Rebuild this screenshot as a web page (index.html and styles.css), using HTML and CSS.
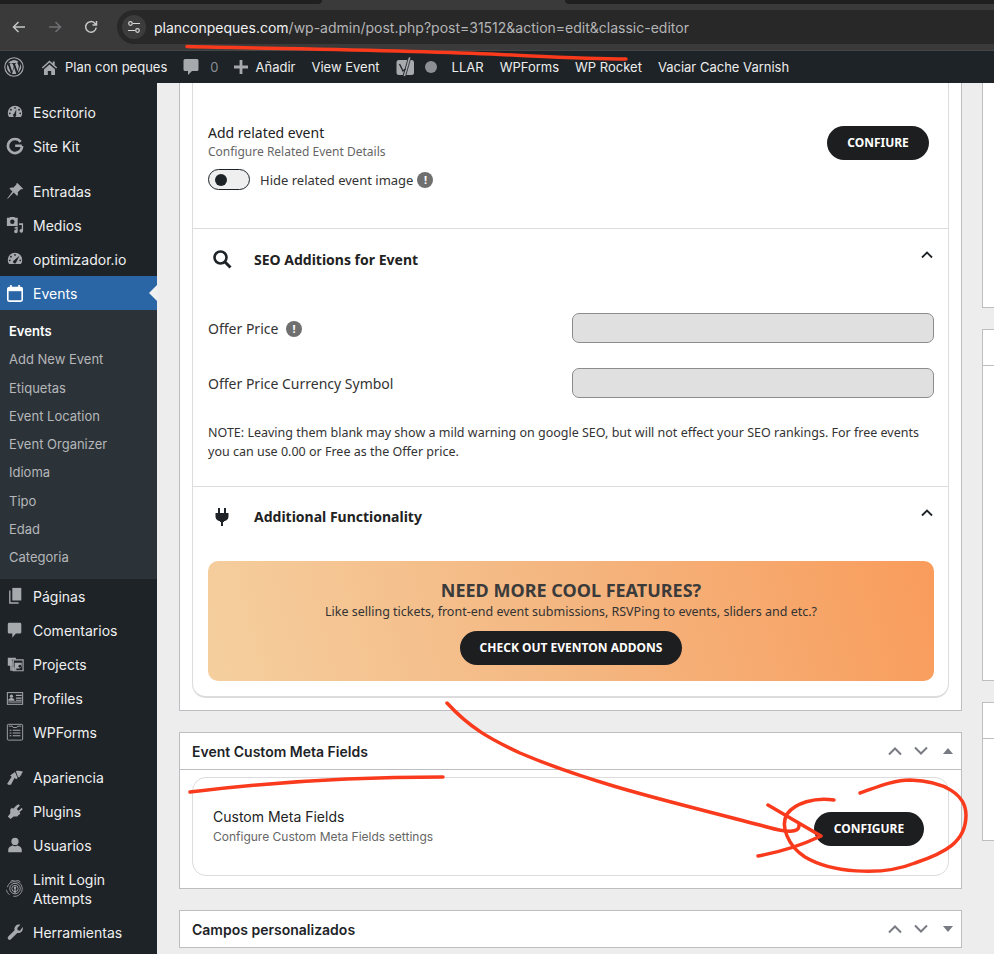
FILE: index.html
```html
<!DOCTYPE html>
<html lang="es">
<head>
    <meta charset="UTF-8">
    <title>Editar evento - Plan con peques</title>
    <link rel="stylesheet" href="styles.css">
</head>
<body>
    <!-- browser chrome -->
    <div class="chrome">
        <div class="tabstrip"><span class="tab-left"></span><span class="tab-right"></span></div>
        <div class="toolbar">
            <svg class="nav-icon" width="16" height="16" viewBox="0 0 16 16"><path d="M14 8H2.5M7.5 3 2.5 8l5 5" fill="none" stroke="#c4c7c5" stroke-width="1.5"/></svg>
            <svg class="nav-icon" width="16" height="16" viewBox="0 0 16 16"><path d="M2 8h11.5M8.500 3l5 5-5 5" fill="none" stroke="#6f7072" stroke-width="1.5"/></svg>
            <svg class="nav-icon" width="16" height="16" viewBox="0 0 16 16"><path d="M13.200 8.500A5.300 5.300 0 1 1 11.800 4.300L13.500 6M13.500 2v4h-4" fill="none" stroke="#c4c7c5" stroke-width="1.500"/></svg>
            <div class="urlbar">
                <span class="site-settings">
                    <svg width="14" height="14" viewBox="0 0 14 14"><g fill="none" stroke="#d6d6d6" stroke-width="1.200"><circle cx="3.500" cy="3.500" r="1.800"/><path d="M6 3.500h7M1 10.500h7"/><circle cx="10.500" cy="10.500" r="1.800"/></g></svg>
                </span>
                <span class="url"><b>planconpeques.com</b>/wp-admin/post.php?post=31512&amp;action=edit&amp;classic-editor</span>
            </div>
        </div>
    </div>

    <!-- wp admin bar -->
    <div class="adminbar">
        <svg class="bar-wp" width="20" height="20" viewBox="0 0 20 20"><circle cx="10" cy="10" r="9.200" fill="none" stroke="#a7aaad" stroke-width="1.100"/><path d="M3 10c0 2.800 1.600 5.200 4 6.300L3.700 7.200A7 7 0 0 0 3 10zm11.700-.4c0-.9-.3-1.500-.6-2-.3-.5-.7-1-.7-1.500 0-.6.500-1.100 1.100-1.100h.1A7 7 0 0 0 4 6.200h.5c.7 0 1.900-.1 1.900-.1.400 0 .4.500 0 .6h-.8l2.600 7.700 1.600-4.700-1.100-3h-.8c-.4 0-.3-.6 0-.6 0 0 1.200.1 1.900.1s1.900-.1 1.900-.1c.4 0 .4.500 0 .6h-.8l2.600 7.600.7-2.400c.3-.9.500-1.600.5-2.300zM10.100 10.600 8 16.800a7 7 0 0 0 4.300-.1l-.1-.1zM16.200 6.600c0 .3.100.6.100 1 0 .7-.1 1.400-.5 2.400l-2.100 6.100A7 7 0 0 0 16.200 6.600z" fill="#a7aaad"/></svg>
        <span class="bar-item bar-site">
            <svg width="17" height="17" viewBox="0 0 17 17"><path d="M8.500 1.500 0.800 8.600l1 1 6.700-6 6.700 6 1-1-2.500-2.300V2.500h-2v2zM3 10.300 8.500 5.400 14 10.300V16h-3.800v-4H6.800v4H3z" fill="#a7aaad"/></svg>
            Plan con peques
        </span>
        <span class="bar-item bar-comments">
            <svg width="16" height="18" viewBox="0 0 16 18"><path d="M2 1h12a1.500 1.500 0 0 1 1.500 1.500v9A1.500 1.500 0 0 1 14 13H9l-4 4v-4H2A1.500 1.500 0 0 1 .5 11.500v-9A1.500 1.500 0 0 1 2 1z" fill="#a7aaad"/></svg>
            <span class="bar-count">0</span>
        </span>
        <span class="bar-item bar-new">
            <svg width="14" height="14" viewBox="0 0 14 14"><path d="M5.600 0h2.800v5.600H14v2.800H8.400V14H5.600V8.400H0V5.600h5.600z" fill="#a7aaad"/></svg>
            Añadir
        </span>
        <span class="bar-item bar-view">View Event</span>
        <svg class="bar-yoast" width="18" height="20" viewBox="0 0 18 20"><path d="M3 3h9L7 18H3a2.500 2.500 0 0 1-2.500-2.500v-10A2.500 2.500 0 0 1 3 3z" fill="#a7aaad"/><path d="M13 3h2.500A2.500 2.500 0 0 1 18 5.500v10a2.500 2.500 0 0 1-2.500 2.500H9z" fill="#a7aaad"/><path d="M12.500 0 7 19.500h2.500L15 0z" fill="#a7aaad" stroke="#1d2327" stroke-width=".8"/><path d="M3.500 7 7 14l2.500-2" fill="none" stroke="#1d2327" stroke-width="1.300"/></svg>
        <span class="bar-dot"></span>
        <span class="bar-item bar-llar">LLAR</span>
        <span class="bar-item bar-forms">WPForms</span>
        <span class="bar-item bar-rocket">WP Rocket</span>
        <span class="bar-item">Vaciar Cache Varnish</span>
    </div>

    <div class="wrap">
        <!-- sidebar -->
        <div class="sidebar">
            <a class="menu-item first">
                <svg class="mi" viewBox="0 0 20 20"><path d="M10 3a8 8 0 0 0-8 8c0 1.800.6 3.400 1.500 4.500h13c.9-1.100 1.500-2.700 1.500-4.500a8 8 0 0 0-8-8z" fill="#a7aaad"/><g fill="#1d2327"><circle cx="10" cy="5.500" r="1"/><circle cx="5.500" cy="7.500" r="1"/><circle cx="4.200" cy="11.500" r="1"/><circle cx="15.800" cy="11.500" r="1"/><circle cx="14.500" cy="7.500" r="1"/><path d="M11.500 7 9 12a1.800 1.800 0 1 0 2.200.8z"/></g></svg>
                Escritorio
            </a>
            <a class="menu-item">
                <svg class="mi" viewBox="0 0 20 20"><path d="M17.600 9.700h-7.400M16.300 5.400A7.800 7.800 0 1 0 17.800 10" fill="none" stroke="#a7aaad" stroke-width="3"/></svg>
                Site Kit
            </a>
            <a class="menu-item sep">
                <svg class="mi" viewBox="0 0 20 20"><path d="M13 1.500 19 7.500l-1.200.8-1-.5-3.800 3.600c.5 1.500.3 3-.6 4.200L8.600 11.800 2 18.500l-.7-.2 5.800-7.700-3.300-3.500c1.200-.9 2.700-1.100 4.200-.6l3.600-3.800-.4-1z" fill="#a7aaad"/></svg>
                Entradas
            </a>
            <a class="menu-item">
                <svg class="mi" viewBox="0 0 20 20"><path d="M1 2h2.500L5 1h4l1.500 1H13v9H1zm6 1.800a2.500 2.500 0 1 0 0 5 2.500 2.500 0 0 0 0-5z" fill="#a7aaad" fill-rule="evenodd"/><path d="M14.500 8H19v8.500a2 2 0 1 1-1.500-1.900V10h-3zM9.500 12.500l3.500-.7v5.200a2 2 0 1 1-1.500-1.900v-1.200l-2 .4z" fill="#a7aaad"/></svg>
                Medios
            </a>
            <a class="menu-item">
                <svg class="mi" viewBox="0 0 20 20"><path d="M10 3a8 8 0 0 0-8 8c0 1.800.6 3.400 1.500 4.500h13c.9-1.100 1.500-2.700 1.500-4.500a8 8 0 0 0-8-8z" fill="#a7aaad"/><g fill="#1d2327"><circle cx="10" cy="5.500" r="1"/><circle cx="5.500" cy="7.500" r="1"/><circle cx="4.200" cy="11.500" r="1"/><circle cx="15.800" cy="11.500" r="1"/><path d="M15 6.500 9 11.500a1.800 1.800 0 1 0 2.400 2z"/></g></svg>
                optimizador.io
            </a>
            <a class="menu-item current">
                <svg class="mi" viewBox="0 0 20 20"><g fill="none" stroke="#fff"><rect x="2" y="4" width="16" height="15" rx="1.500" stroke-width="1.800"/><path d="M2 6h16" stroke-width="4"/><path d="M5.500 1v4M14.500 1v4" stroke-width="1.800"/></g></svg>
                Events
            </a>
            <div class="submenu">
                <a class="sub-item active">Events</a>
                <a class="sub-item">Add New Event</a>
                <a class="sub-item">Etiquetas</a>
                <a class="sub-item">Event Location</a>
                <a class="sub-item">Event Organizer</a>
                <a class="sub-item">Idioma</a>
                <a class="sub-item">Tipo</a>
                <a class="sub-item">Edad</a>
                <a class="sub-item">Categoria</a>
            </div>
            <a class="menu-item">
                <svg class="mi" viewBox="0 0 20 20"><path d="M7 1h10v14H7z" fill="#a7aaad"/><path d="M5 4v13h9v1.500H3.500V4z" fill="#a7aaad"/></svg>
                Páginas
            </a>
            <a class="menu-item">
                <svg class="mi" viewBox="0 0 20 20"><path d="M3.500 2h12A1.500 1.500 0 0 1 17 3.500v9a1.500 1.500 0 0 1-1.500 1.500H11l-4 4.500V14H3.500A1.500 1.500 0 0 1 2 12.500v-9A1.500 1.500 0 0 1 3.500 2z" fill="#a7aaad"/></svg>
                Comentarios
            </a>
            <a class="menu-item">
                <svg class="mi" viewBox="0 0 20 20"><path d="M2 3h9v2H6.500v7H2z" fill="#a7aaad"/><path d="M4.500 6.500h3V14h4v3.500h-7z" fill="#a7aaad" opacity=".85"/><path d="M8 5.500h11V17.500H8z" fill="none" stroke="#a7aaad" stroke-width="1.300"/><path d="M9.500 8.500h8v4.500l-2 2h-6z" fill="#a7aaad"/><circle cx="15.500" cy="12.500" r="1.600" fill="#1d2327"/></svg>
                Projects
            </a>
            <a class="menu-item">
                <svg class="mi" viewBox="0 0 20 20"><rect x="1.500" y="4" width="17" height="13" fill="none" stroke="#a7aaad" stroke-width="1.100"/><circle cx="6" cy="8" r="1.800" fill="#a7aaad"/><path d="M2.500 13c0-2 1.500-3 3.500-3s3.500 1 3.500 3zM11 6.500h6.500v1.300H11zM11 9.500h6.500v1.300H11zM2.500 14h15v1H2.500zM11 12h6.500v1H11z" fill="#a7aaad"/></svg>
                Profiles
            </a>
            <a class="menu-item">
                <svg class="mi" viewBox="0 0 20 20"><rect x="1.500" y="1.500" width="17" height="17.500" rx="1" fill="none" stroke="#a7aaad" stroke-width="1"/><path d="M3 3.500h4l1 1.500h4l1-1.500h4" fill="none" stroke="#a7aaad"/><path d="M4 7.500h2v1.200H4zM7.500 7.500H16v1.200H7.500zM4 10.500h2v1.200H4zM7.500 10.500H16v1.200H7.500zM4 13.500h2v1.200H4zM7.500 13.500H16v1.200H7.500z" fill="#a7aaad"/></svg>
                WPForms
            </a>
            <a class="menu-item sep">
                <svg class="mi" viewBox="0 0 20 20"><path d="M11 3.500c2.500-.8 5 0 8 .6-1.500 1.200-2 2.800-2.200 4.600l-1.500-.4.300 2-2.300-.4zM10 4.500l3 6.700-1.800 1.300-1.600-1.800L5.500 18.500H2.300l-1-1 5-7.700-1.700-1.500z" fill="#a7aaad"/></svg>
                Apariencia
            </a>
            <a class="menu-item">
                <svg class="mi" viewBox="0 0 20 20"><path d="M14.500 2 16 3.500l-3.500 3.800 2 2 3.500-3.300 1 1.500-3.500 3.500 1 1.500-2 1.500-1.500 1.500H9l-3.500 3-3-3 2.700-3.300v-4L7 6l1.500 1 3.500-3.500z" fill="#a7aaad" transform="translate(-.5 .5)"/></svg>
                Plugins
            </a>
            <a class="menu-item">
                <svg class="mi" viewBox="0 0 20 20"><circle cx="10" cy="6" r="4" fill="#a7aaad"/><path d="M2.500 18v-3c0-2.500 3-4 5-4.500 1.500 1 3.500 1 5 0 2 .5 5 2 5 4.500v3z" fill="#a7aaad"/></svg>
                Usuarios
            </a>
            <a class="menu-item two-line">
                <svg class="mi" viewBox="0 0 20 20"><g fill="none" stroke="#a7aaad"><path d="M5 1.500A10 10 0 0 1 16 2" stroke-width=".9"/><path d="M1.500 8A8.500 8.500 0 0 1 18 8.500 8.500 8.500 0 0 1 8 18" stroke-width=".9"/><path d="M4 16.500A9 9 0 0 1 .4 11" stroke-width=".9" /><circle cx="10" cy="9.500" r="5.800" stroke-width="1"/><circle cx="10" cy="9.500" r="3.500" stroke-width="1"/></g><path d="M9.300 8.500h1.400v6h-1.400z" fill="#a7aaad"/><circle cx="10" cy="8.500" r="1.300" fill="#a7aaad"/></svg>
                <span>Limit Login<br>Attempts</span>
            </a>
            <a class="menu-item">
                <svg class="mi" viewBox="0 0 20 20"><path d="M18.500 4.500c.6 2 .1 4-1.300 5.300-1.200 1.200-3 1.700-4.700 1.200l-7 7a2.100 2.100 0 0 1-3-3l7-7c-.5-1.700 0-3.500 1.200-4.700 1.300-1.400 3.300-1.900 5.300-1.300L12.500 5.500 13 8l2.500.5z" fill="#a7aaad"/></svg>
                Herramientas
            </a>
        </div>

        <!-- editor columns -->
        <div class="content">
            <div class="col-main">
                <div class="postbox cut-top">
                    <div class="evo-box">
                        <div class="evo-related">
                            <div class="row-between">
                                <div>
                                    <div class="row-title">Add related event</div>
                                    <div class="row-sub">Configure Related Event Details</div>
                                </div>
                                <a class="btn related-btn">CONFIURE</a>
                            </div>
                            <div class="toggle-row">
                                <span class="toggle"><span class="knob"></span></span>
                                <span>Hide related event image</span>
                                <span class="info">!</span>
                            </div>
                        </div>

                        <div class="evo-head seo-head">
                            <svg class="evo-icon" width="20" height="20" viewBox="0 0 20 20"><circle cx="8.500" cy="8.500" r="6" fill="none" stroke="#1d2327" stroke-width="2.600"/><path d="m13 13 5.500 5.500" stroke="#1d2327" stroke-width="3"/></svg>
                            <span class="evo-title">SEO Additions for Event</span>
                            <svg class="chev" width="12" height="8" viewBox="0 0 12 8"><path d="M1 6.500l5-5 5 5" fill="none" stroke="#1d2327" stroke-width="1.800"/></svg>
                        </div>
                        <div class="seo-body">
                            <div class="field">
                                <label>Offer Price <span class="info">!</span></label>
                                <span class="input"></span>
                            </div>
                            <div class="field">
                                <label>Offer Price Currency Symbol</label>
                                <span class="input"></span>
                            </div>
                            <p class="note">NOTE: Leaving them blank may show a mild warning on google SEO, but will not effect your SEO rankings. For free events you can use 0.00 or Free as the Offer price.</p>
                        </div>

                        <div class="evo-head func-head">
                            <svg class="evo-icon" width="20" height="20" viewBox="0 0 20 20"><path d="M6 1h2v5H6zM12 1h2v5h-2zM3.500 6h13v3.500c0 2.800-2.200 4.500-4.500 4.800V15h-1v4H9v-4H8v-.7C5.700 14 3.500 12.300 3.500 9.500z" fill="#1d2327"/></svg>
                            <span class="evo-title">Additional Functionality</span>
                            <svg class="chev" width="12" height="8" viewBox="0 0 12 8"><path d="M1 6.500l5-5 5 5" fill="none" stroke="#1d2327" stroke-width="1.800"/></svg>
                        </div>
                        <div class="promo">
                            <div class="promo-title">NEED MORE COOL FEATURES?</div>
                            <div class="promo-sub">Like selling tickets, front-end event submissions, RSVPing to events, sliders and etc.?</div>
                            <a class="btn promo-btn">CHECK OUT EVENTON ADDONS</a>
                        </div>
                    </div>
                </div>

                <div class="postbox">
                    <div class="postbox-head">
                        <span>Event Custom Meta Fields</span>
                        <span class="handles">
                            <svg width="16" height="10" viewBox="0 0 16 10"><path d="M2 8.500l6-6 6 6" fill="none" stroke="#787c82" stroke-width="2"/></svg>
                            <svg width="16" height="10" viewBox="0 0 16 10"><path d="M2 1.500l6 6 6-6" fill="none" stroke="#787c82" stroke-width="2"/></svg>
                            <svg width="10" height="6" viewBox="0 0 10 6"><path d="M5 0l5 6H0z" fill="#787c82"/></svg>
                        </span>
                    </div>
                    <div class="meta-wrap">
                        <div class="meta-box">
                            <div>
                                <div class="row-title">Custom Meta Fields</div>
                                <div class="row-sub">Configure Custom Meta Fields settings</div>
                            </div>
                            <a class="btn meta-btn">CONFIGURE</a>
                        </div>
                    </div>
                </div>

                <div class="postbox">
                    <div class="postbox-head no-line">
                        <span>Campos personalizados</span>
                        <span class="handles">
                            <svg width="16" height="10" viewBox="0 0 16 10"><path d="M2 8.500l6-6 6 6" fill="none" stroke="#787c82" stroke-width="2"/></svg>
                            <svg width="16" height="10" viewBox="0 0 16 10"><path d="M2 1.500l6 6 6-6" fill="none" stroke="#787c82" stroke-width="2"/></svg>
                            <svg width="10" height="6" viewBox="0 0 10 6"><path d="M5 6l5-6H0z" fill="#787c82"/></svg>
                        </span>
                    </div>
                </div>
            </div>

            <div class="col-side">
                <div class="sidebox sb-one"></div>
                <div class="sidebox sb-two"><div class="sb-head"></div></div>
                <div class="sidebox sb-three"><div class="sb-head"></div></div>
            </div>
        </div>
    </div>

    <!-- hand drawn marks on top of the screenshot -->
    <svg class="marks" width="994" height="954" viewBox="0 0 994 954">
        <g fill="none" stroke="#f93a1c" stroke-width="3.500" stroke-linecap="round" stroke-linejoin="round">
            <path d="M187 46.500C290 49 400 50 500 54.500 545 56.500 590 59 626 59"/>
            <path d="M190 792C270 782 360 777 443 777"/>
            <path d="M447 703C470 728 490 739 520 753 600 787 690 806 767 827 785 832 800 834 799 825"/>
            <path d="M768 805 821 836C800 846 780 852 758 856"/>
            <path d="M834 800C815 797 795 803 787 814 780 826 788 846 805 857 830 872 880 877 915 863 945 853 966 842 966 815 966 795 945 781 910 780 893 780 875 788 860 793"/>
        </g>
    </svg>
</body>
</html>
```

FILE: styles.css
```css
* {
    box-sizing: border-box;
}

html, body {
    margin: 0;
    height: 954px;
    overflow: hidden;
}

body {
    position: relative;
    background: #ededed;
    font-family: "Noto Sans", sans-serif;
    color: #1d2327;
}

a {
    display: block;
    text-decoration: none;
}

svg {
    flex: none;
    display: block;
}

/* browser chrome */
.chrome {
    height: 51px;
    background: #3a3a3b;
    border-bottom: 1px solid #454647;
}

.tabstrip {
    height: 4px;
    position: relative;
}

.tab-left, .tab-right {
    position: absolute;
    top: 0;
    height: 4px;
    background: #1f1f20;
}

.tab-left {
    left: 0;
    width: 322px;
    border-bottom-right-radius: 6px;
}

.tab-right {
    left: 565px;
    right: 0;
    border-bottom-left-radius: 6px;
}

.toolbar {
    display: flex;
    align-items: center;
    height: 46px;
    padding-left: 11px;
    margin-top: 0;
}

.nav-icon {
    margin-right: 20px;
}

.nav-icon:nth-child(3) {
    margin-right: 18px;
}

.urlbar {
    display: flex;
    align-items: center;
    flex: 1;
    height: 34px;
    padding-left: 5px;
    margin-right: -20px;
    background: #282829;
    border-radius: 17px;
    font-family: Inter, sans-serif;
    font-size: 14px;
    color: #b4b5b6;
}

.site-settings {
    display: flex;
    align-items: center;
    justify-content: center;
    width: 24px;
    height: 24px;
    margin-right: 8px;
    border-radius: 50%;
    background: #3c3c3d;
}

.url b {
    font-weight: 400;
    color: #f1f1f1;
}

/* admin bar */
.adminbar {
    display: flex;
    align-items: center;
    height: 32px;
    padding-left: 4px;
    background: #1d2327;
    font-family: Inter, sans-serif;
    font-size: 13px;
    color: #eeeeee;
}

.bar-item {
    display: flex;
    align-items: center;
    white-space: nowrap;
    margin-right: 16px;
}

.bar-wp {
    margin-right: 17px;
}

.bar-site svg {
    margin-right: 7px;
}

.bar-comments svg {
    margin-right: 11px;
}

.bar-count {
    color: #8c8f94;
}

.bar-new svg {
    margin-right: 7px;
}

.bar-yoast {
    margin-right: 11px;
}

.bar-dot {
    width: 12px;
    height: 12px;
    margin-right: 15px;
    border-radius: 50%;
    background: #8c8f94;
}

/* layout */
.wrap {
    display: flex;
    height: 871px;
    overflow: hidden;
}

/* sidebar */
.sidebar {
    flex: none;
    width: 157px;
    padding-top: 12px;
    background: #1d2327;
    font-family: Inter, sans-serif;
    color: #f0f0f1;
}

.menu-item {
    display: flex;
    align-items: center;
    position: relative;
    height: 34px;
    padding-left: 6px;
    font-size: 14px;
    color: #f0f0f1;
    white-space: nowrap;
}

.menu-item.sep {
    margin-top: 11px;
}

.mi {
    width: 18px;
    height: 18px;
    margin-right: 9px;
}

.menu-item.current {
    background: #2a66a6;
    color: #fff;
}

.menu-item.current::after {
    content: '';
    position: absolute;
    right: 0;
    top: 9px;
    border: 8px solid transparent;
    border-right-color: #f0f0f1;
    border-left-width: 0;
}

.menu-item.two-line {
    height: 53px;
    line-height: 19px;
}

.submenu {
    padding: 7px 0 8px;
    background: #2c3338;
}

.sub-item {
    height: 28.25px;
    line-height: 28px;
    padding-left: 9px;
    font-size: 13px;
    color: #b5b7ba;
}

.sub-item.active {
    font-weight: 600;
    color: #fff;
}

/* editor columns */
.content {
    display: flex;
    flex: 1;
    padding-left: 22px;
}

.col-main {
    flex: none;
    width: 783px;
}

.col-side {
    flex: 1;
    margin-left: 20px;
    margin-right: -4px;
}

.postbox {
    margin-bottom: 21px;
    background: #fff;
    border: 1px solid #bdbec1;
}

.postbox.cut-top {
    border-top: 0;
    height: 628px;
    padding: 0 12px;
}

.evo-box {
    height: 615px;
    background: #fff;
    border: 1px solid #dcdcde;
    border-top: 0;
    border-bottom-width: 2px;
    border-radius: 0 0 14px 14px;
}

.evo-related {
    height: 146px;
    padding: 40px 15px 0;
    border-bottom: 1px solid #dcdcde;
}

.row-between {
    display: flex;
    justify-content: space-between;
}

.row-title {
    font-size: 14px;
    line-height: 19px;
    color: #222;
}

.row-sub {
    margin-top: 1px;
    font-size: 12px;
    line-height: 18px;
    color: #666;
}

.btn {
    height: 34px;
    line-height: 33px;
    border-radius: 17px;
    background: #1d1e20;
    color: #fff;
    font-size: 12px;
    font-weight: 700;
    text-align: center;
}

.related-btn {
    width: 102px;
    margin: 3px 4px 0 0;
}

.toggle-row {
    display: flex;
    align-items: center;
    margin-top: 8px;
    font-size: 13px;
    color: #333;
}

.toggle {
    display: flex;
    align-items: center;
    width: 42px;
    height: 21px;
    margin-right: 10px;
    padding-left: 6px;
    background: #efefef;
    border: 1px solid #1d2327;
    border-radius: 11px;
}

.knob {
    width: 12px;
    height: 12px;
    border-radius: 50%;
    background: #1d2327;
}

.info {
    display: inline-block;
    width: 16px;
    height: 16px;
    margin-left: 4px;
    border-radius: 50%;
    background: #6f6f6f;
    color: #fff;
    font-size: 11px;
    font-weight: 700;
    line-height: 16px;
    text-align: center;
    vertical-align: 1px;
}

.evo-head {
    display: flex;
    align-items: center;
    padding: 0 15px 0 19px;
}

.seo-head {
    height: 60px;
}

.func-head {
    height: 60px;
    border-top: 1px solid #dcdcde;
}

.evo-icon {
    margin-right: 22px;
}

.evo-title {
    flex: 1;
    font-size: 14px;
    font-weight: 700;
    color: #222;
}

.chev {
    margin-top: -8px;
}

.seo-body {
    height: 197px;
    padding: 24px 14px 0 15px;
}

.field {
    display: flex;
    align-items: center;
    justify-content: space-between;
    height: 30px;
    margin-bottom: 25px;
    font-size: 14px;
    color: #333;
}

.input {
    width: 362px;
    height: 30px;
    background: #e0e0e0;
    border: 1px solid #8c8c8c;
    border-radius: 7px;
}

.note {
    margin: 0;
    padding-top: 0;
    font-size: 12.500px;
    line-height: 19px;
    color: #333;
}

.promo {
    height: 120px;
    margin: 15px 14px 0 15px;
    padding-top: 17px;
    border-radius: 10px;
    background: linear-gradient(75deg, #f5cf9f 0%, #f4b680 50%, #f99c5c 100%);
    text-align: center;
}

.promo-title {
    font-size: 18px;
    font-weight: 700;
    line-height: 24px;
    color: #3b3b3b;
}

.promo-sub {
    font-size: 12.500px;
    line-height: 20px;
    color: #333;
}

.promo-btn {
    width: 222px;
    margin: 9px auto 0;
}

.postbox-head {
    display: flex;
    align-items: center;
    justify-content: space-between;
    height: 37px;
    padding: 0 8px 0 12px;
    border-bottom: 1px solid #bdbec1;
    font-family: Inter, sans-serif;
    font-size: 14px;
    font-weight: 600;
    color: #1d2327;
}

.postbox-head.no-line {
    height: 36px;
    border-bottom: 0;
}

.handles {
    display: flex;
    align-items: center;
    gap: 10px;
}

.handles svg:last-child {
    margin-left: 4px;
}

.meta-wrap {
    padding: 7px 12px 12px;
}

.meta-box {
    display: flex;
    align-items: flex-start;
    justify-content: space-between;
    height: 99px;
    padding: 29px 24px 0 20px;
    border: 1px solid #dcdcde;
    border-radius: 14px;
    font-family: Inter, sans-serif;
}

.meta-box .row-sub {
    margin-top: 2px;
}

.meta-btn {
    width: 110px;
    margin-top: 5px;
    font-family: "Noto Sans", sans-serif;
}

.sidebox {
    background: #fff;
    border: 1px solid #bdbec1;
    border-right: 0;
    margin-bottom: 21px;
}

.sb-one {
    height: 225px;
    border-top: 0;
}

.sb-two {
    height: 352px;
}

.sb-three {
    height: 139px;
}

.sb-head {
    height: 36px;
    border-bottom: 1px solid #bdbec1;
}

/* annotation layer */
.marks {
    position: absolute;
    left: 0;
    top: 0;
    pointer-events: none;
}
```
